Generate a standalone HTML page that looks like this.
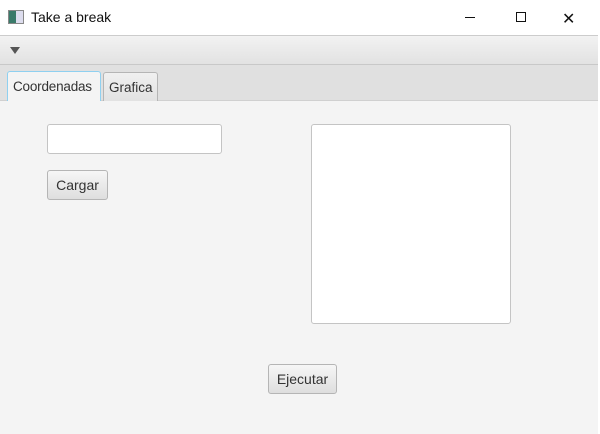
<!DOCTYPE html>
<html><head><style>
*{box-sizing:border-box;margin:0;padding:0}
body{width:600px;height:434px;background:#f4f4f4;font-family:"Liberation Sans",sans-serif;font-size:13px;color:#333;position:relative;overflow:hidden}
.abs{position:absolute}
.title{left:0;top:0;width:600px;height:35px;background:#fff}
.btn{background:linear-gradient(#f6f6f6,#dedede);border:1px solid #b5b5b5;border-radius:3px;text-align:center;color:#333}
</style></head><body>
<div class="abs title"></div>
<div class="abs" style="left:8px;top:10px;width:16px;height:14px;border:1px solid #888;background:linear-gradient(90deg,#3a7a6a 0 50%,#dde 50%)"></div>
<div class="abs" style="left:31px;top:9px;font-size:14px;color:#111">Take a break</div>
<div class="abs" style="left:465px;top:17px;width:10px;height:1px;background:#111"></div>
<div class="abs" style="left:516px;top:12px;width:10px;height:10px;border:1px solid #111"></div>
<div class="abs" style="left:562px;top:9px;font-size:16px;color:#111">✕</div>
<div class="abs" style="left:0;top:35px;width:598px;height:30px;background:linear-gradient(#f2f2f2,#e2e2e2);border-top:1px solid #ccc;border-bottom:1px solid #c8c8c8"></div>
<div class="abs" style="left:10px;top:47px;width:0;height:0;border-left:5px solid transparent;border-right:5px solid transparent;border-top:7px solid #555"></div>
<div class="abs" style="left:0;top:65px;width:598px;height:36px;background:#e0e0e0;border-bottom:1px solid #d0d0d0"></div>
<div class="abs" style="left:103px;top:72px;width:55px;height:29px;background:linear-gradient(#f0f0f0,#e2e2e2);border:1px solid #b5b5b5;border-bottom:none;border-radius:3px 3px 0 0;padding:7px 0 0 5px;font-size:13.5px">Grafica</div>
<div class="abs" style="left:7px;top:71px;width:94px;height:30px;background:#f4f4f4;border:1px solid #8fd0f0;border-bottom:none;border-radius:3px 3px 0 0;padding:7px 0 0 5px;font-size:13.5px;letter-spacing:-0.2px">Coordenadas</div>
<div class="abs" style="left:598px;top:35px;width:2px;height:399px;background:#fff"></div>
<div class="abs" style="left:47px;top:124px;width:175px;height:30px;background:#fff;border:1px solid #c4c4c4;border-radius:3px"></div>
<div class="abs btn" style="left:47px;top:170px;width:61px;height:30px;line-height:28px;font-size:14px">Cargar</div>
<div class="abs" style="left:311px;top:124px;width:200px;height:200px;background:#fff;border:1px solid #c4c4c4;border-radius:3px"></div>
<div class="abs btn" style="left:268px;top:364px;width:69px;height:30px;line-height:28px;font-size:14px">Ejecutar</div>
</body></html>
